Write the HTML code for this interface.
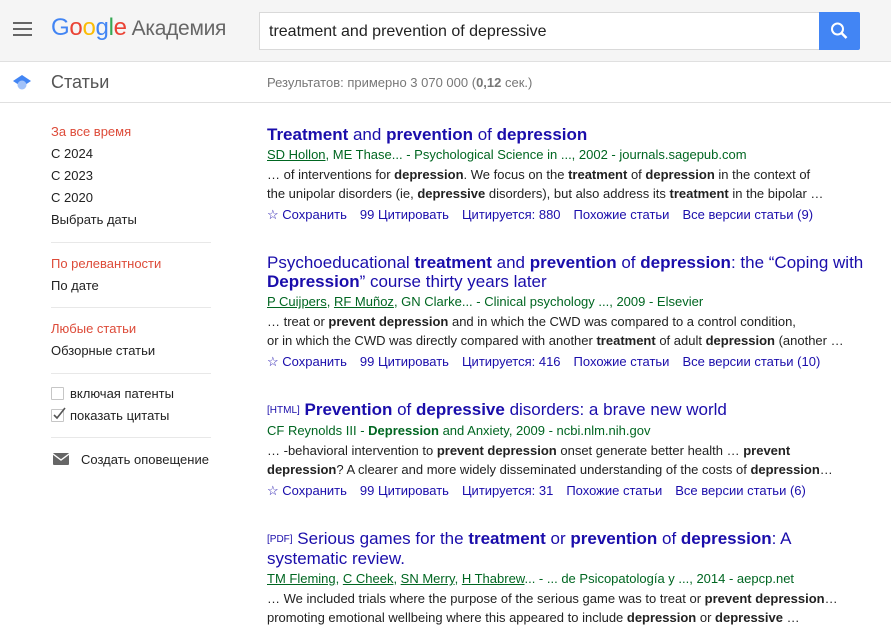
<!DOCTYPE html>
<html><head><meta charset="utf-8"><style>
*{margin:0;padding:0;box-sizing:border-box}
body{width:891px;height:633px;overflow:hidden;font-family:"Liberation Sans",Arial,sans-serif;background:#fff;position:relative;color:#222}
.hdr{position:absolute;left:0;top:0;width:891px;height:62px;background:#f5f5f5;border-bottom:1px solid #e0e0e0}
.burger{position:absolute;left:13px;top:22px;width:19px}
.burger i{display:block;height:2px;background:#666;margin-bottom:4px}
.logo{position:absolute;left:51px;top:14px;font-size:24px;letter-spacing:-0.3px}
.logo b{font-weight:normal}
.logo .ak{color:#666;margin-left:5px;font-size:21px}
.sbox{position:absolute;left:259px;top:12px;width:561px;height:38px;background:#fff;border:1px solid #d9d9d9;font-size:16px;padding:10px 9px;color:#222}
.sbtn{position:absolute;left:819px;top:12px;width:41px;height:38px;background:#4285f4;border-radius:0 2px 2px 0}
.bar2{position:absolute;left:0;top:62px;width:891px;height:41px;border-bottom:1px solid #e0e0e0}
.st{position:absolute;left:51px;top:10px;font-size:18px;color:#555}
.res{position:absolute;left:267px;top:13px;font-size:13px;color:#777}
.side{position:absolute;left:51px;font-size:13px;line-height:22px}
.red{color:#dd4b39}
.hr{position:absolute;left:51px;width:160px;height:1px;background:#e8e8e8}
.cb{display:inline-block;width:13px;height:13px;border:1px solid #c6c6c6;border-radius:1px;vertical-align:-2px;margin-right:6px;position:relative}
.r{position:absolute;left:267px;width:610px}
.t{font-size:17px;color:#1a0dab;line-height:19px}
.t b{font-weight:bold}
.a{font-size:13px;color:#006621;line-height:20px;margin-top:1px}
.a u{text-decoration:underline}
.s{font-size:13px;color:#222;line-height:19px}
.act{font-size:13px;color:#1a0dab;line-height:19px;margin-top:2px;white-space:nowrap}
.act span{margin-right:13px}
.tag{font-size:10px;color:#1a0dab;vertical-align:2px}
</style></head><body>
<div class="hdr">
<div class="burger"><i></i><i></i><i></i></div>
<div class="logo"><b style="color:#4285f4">G</b><b style="color:#ea4335">o</b><b style="color:#fbbc05">o</b><b style="color:#4285f4">g</b><b style="color:#34a853">l</b><b style="color:#ea4335">e</b><span class="ak">Академия</span></div>
<div class="sbox">treatment and prevention of depressive</div>
<div class="sbtn"><svg width="41" height="38" viewBox="0 0 41 38"><circle cx="18.5" cy="17" r="5.5" fill="none" stroke="#fff" stroke-width="2"/><path d="M22.5 21l5 5" stroke="#fff" stroke-width="2.5"/></svg></div>
</div>
<div class="bar2">
<svg style="position:absolute;left:12px;top:10px" width="20" height="20" viewBox="0 0 20 20"><path d="M1 9l9-6 9 6-9 6z" fill="#4285f4"/><circle cx="10" cy="13" r="4.5" fill="#a1c2fa"/></svg>
<div class="st">Статьи</div>
<div class="res">Результатов: примерно 3 070 000 (<b>0,12</b> сек.)</div>
</div>
<div class="side" style="top:121px"><div class="red">За все время</div><div>С 2024</div><div>С 2023</div><div>С 2020</div><div>Выбрать даты</div></div>
<div class="hr" style="top:242px"></div>
<div class="side" style="top:253px"><div class="red">По релевантности</div><div>По дате</div></div>
<div class="hr" style="top:307px"></div>
<div class="side" style="top:318px"><div class="red">Любые статьи</div><div>Обзорные статьи</div></div>
<div class="hr" style="top:373px"></div>
<div class="side" style="top:383px"><div><span class="cb"></span>включая патенты</div><div><span class="cb"><svg style="position:absolute;left:0;top:-3px" width="15" height="14"><path d="M2 8l3 3 8-10" fill="none" stroke="#555" stroke-width="1.6"/></svg></span>показать цитаты</div></div>
<div class="hr" style="top:437px"></div>
<div class="side" style="top:449px"><svg width="16" height="12" style="vertical-align:-1px;margin:0 12px 0 2px"><rect width="16" height="12" rx="1" fill="#666"/><path d="M0 1l8 6 8-6" stroke="#fff" fill="none" stroke-width="1.4"/></svg>Создать оповещение</div>

<div class="r" style="top:125px">
<div class="t"><b>Treatment</b> and <b>prevention</b> of <b>depression</b></div>
<div class="a"><u>SD Hollon</u>, ME Thase... - Psychological Science in ..., 2002 - journals.sagepub.com</div>
<div class="s">… of interventions for <b>depression</b>. We focus on the <b>treatment</b> of <b>depression</b> in the context of<br>the unipolar disorders (ie, <b>depressive</b> disorders), but also address its <b>treatment</b> in the bipolar …</div>
<div class="act"><span>☆ Сохранить</span><span>99 Цитировать</span><span>Цитируется: 880</span><span>Похожие статьи</span><span>Все версии статьи (9)</span></div>
</div>
<div class="r" style="top:253px">
<div class="t">Psychoeducational <b>treatment</b> and <b>prevention</b> of <b>depression</b>: the “Coping with<br><b>Depression</b>” course thirty years later</div>
<div class="a"><u>P Cuijpers</u>, <u>RF Muñoz</u>, GN Clarke... - Clinical psychology ..., 2009 - Elsevier</div>
<div class="s">… treat or <b>prevent depression</b> and in which the CWD was compared to a control condition,<br>or in which the CWD was directly compared with another <b>treatment</b> of adult <b>depression</b> (another …</div>
<div class="act"><span>☆ Сохранить</span><span>99 Цитировать</span><span>Цитируется: 416</span><span>Похожие статьи</span><span>Все версии статьи (10)</span></div>
</div>
<div class="r" style="top:400px">
<div class="t"><span class="tag">[HTML]</span> <b>Prevention</b> of <b>depressive</b> disorders: a brave new world</div>
<div class="a">CF Reynolds III - <b>Depression</b> and Anxiety, 2009 - ncbi.nlm.nih.gov</div>
<div class="s">… -behavioral intervention to <b>prevent depression</b> onset generate better health … <b>prevent</b><br><b>depression</b>? A clearer and more widely disseminated understanding of the costs of <b>depression</b>…</div>
<div class="act"><span>☆ Сохранить</span><span>99 Цитировать</span><span>Цитируется: 31</span><span>Похожие статьи</span><span>Все версии статьи (6)</span></div>
</div>
<div class="r" style="top:529px">
<div class="t"><span class="tag">[PDF]</span> Serious games for the <b>treatment</b> or <b>prevention</b> of <b>depression</b>: A<br>systematic review.</div>
<div class="a"><u>TM Fleming</u>, <u>C Cheek</u>, <u>SN Merry</u>, <u>H Thabrew</u>... - ... de Psicopatología y ..., 2014 - aepcp.net</div>
<div class="s">… We included trials where the purpose of the serious game was to treat or <b>prevent depression</b>…<br>promoting emotional wellbeing where this appeared to include <b>depression</b> or <b>depressive</b> …</div>
</div>
</body></html>
